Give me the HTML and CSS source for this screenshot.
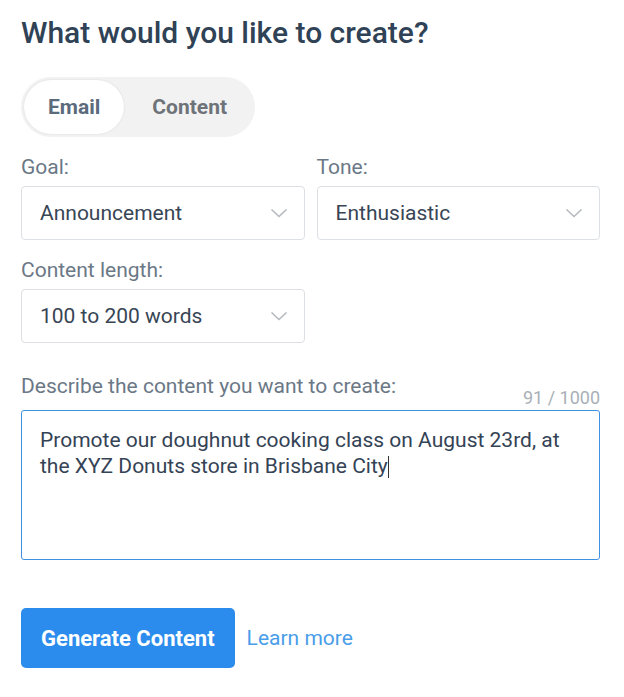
FILE: index.html
```html
<!DOCTYPE html>
<html>
<head>
<meta charset="utf-8">
<link rel="stylesheet" href="styles.css">
</head>
<body>
<div class="page">
  <h1 class="title">What would you like to create?</h1>
  <div class="toggle">
    <div class="toggle-item active">Email</div>
    <div class="toggle-item second">Content</div>
  </div>
  <div class="row first">
    <div class="field">
      <div class="label">Goal:</div>
      <div class="select"><span>Announcement</span><svg class="chev" viewBox="0 0 18 10" width="18" height="10"><path d="M1.5 1.5 L9 8.5 L16.5 1.5" fill="none" stroke="#b4b9bf" stroke-width="1.6"/></svg></div>
    </div>
    <div class="field">
      <div class="label">Tone:</div>
      <div class="select"><span>Enthusiastic</span><svg class="chev" viewBox="0 0 18 10" width="18" height="10"><path d="M1.5 1.5 L9 8.5 L16.5 1.5" fill="none" stroke="#b4b9bf" stroke-width="1.6"/></svg></div>
    </div>
  </div>
  <div class="row second-row">
    <div class="field">
      <div class="label">Content length:</div>
      <div class="select"><span>100 to 200 words</span><svg class="chev" viewBox="0 0 18 10" width="18" height="10"><path d="M1.5 1.5 L9 8.5 L16.5 1.5" fill="none" stroke="#b4b9bf" stroke-width="1.6"/></svg></div>
    </div>
    <div class="field"></div>
  </div>
  <div class="describe">
    <div class="label">Describe the content you want to create:</div>
    <div class="counter">91 / 1000</div>
    <div class="textarea">Promote our doughnut cooking class on August 23rd, at the XYZ Donuts store in Brisbane City<span class="caret"></span></div>
  </div>
  <div class="actions">
    <button class="btn">Generate Content</button>
    <a class="link">Learn more</a>
  </div>
</div>
</body>
</html>
```

FILE: styles.css
```css
* { box-sizing: border-box; }
body {
  margin: 0;
  background: #ffffff;
  font-family: Roboto, "Liberation Sans", Arial, sans-serif;
}
.page {
  padding: 15px 24px 0 21px;
}
.title {
  margin: 0;
  font-size: 30px;
  line-height: 36px;
  font-weight: 500;
  color: #2f4256;
}
.toggle {
  margin-top: 26px;
  display: inline-flex;
  align-items: center;
  height: 60px;
  padding: 3px;
  background: #f2f2f2;
  border-radius: 30px;
}
.toggle-item {
  height: 54px;
  display: flex;
  align-items: center;
  padding: 0 24px;
  font-size: 21px;
  font-weight: 700;
  color: #6e7379;
  border-radius: 27px;
}
.toggle-item.second {
  padding: 0 25px 0 28px;
}
.toggle-item.active {
  background: #ffffff;
  color: #5b6b7c;
  box-shadow: 0 0 2px rgba(0,0,0,0.12);
}
.row {
  display: flex;
  gap: 12px;
}
.row.first { margin-top: 18px; }
.row.second-row { margin-top: 18px; }
.field {
  flex: 1;
}
.label {
  font-size: 21px;
  line-height: 24px;
  color: #6b7886;
}
.field .label { margin-bottom: 7px; }
.select {
  height: 54px;
  border: 1px solid #dcdfe3;
  border-radius: 4px;
  display: flex;
  align-items: center;
  justify-content: space-between;
  padding: 0 16px 0 18px;
  font-size: 21px;
  color: #384555;
}
.chev { display: block; }
.describe {
  margin-top: 31px;
}
.counter {
  text-align: right;
  font-size: 18px;
  line-height: 20px;
  color: #a9b0b8;
  margin-top: -10px;
  margin-bottom: 2px;
}
.textarea {
  height: 150px;
  border: 1px solid #3f91e2;
  border-radius: 3px;
  padding: 16px 18px;
  font-size: 21px;
  line-height: 26px;
  color: #344355;
}
.caret {
  display: inline-block;
  width: 1.5px;
  height: 22px;
  background: #333;
  vertical-align: -5px;
}
.actions {
  margin-top: 48px;
  display: flex;
  align-items: center;
  gap: 12px;
}
.btn {
  height: 60px;
  padding: 0 20px;
  border: none;
  border-radius: 5px;
  background: #2b8cee;
  color: #ffffff;
  font-family: Roboto, "Liberation Sans", Arial, sans-serif;
  font-size: 22px;
  font-weight: 700;
}
.link {
  font-size: 21px;
  color: #4a9de9;
}
```
